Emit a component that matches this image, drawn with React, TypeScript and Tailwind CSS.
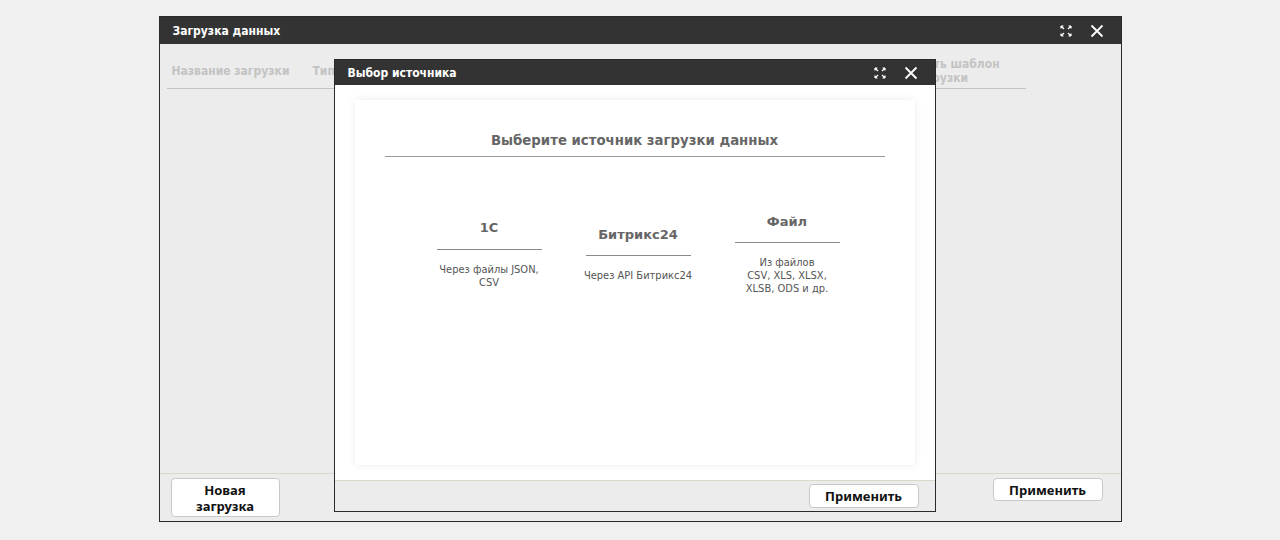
import React from 'react';

const SOURCES = [
  { title: '1C', lines: ['Через файлы JSON,', 'CSV'] },
  { title: 'Битрикс24', lines: ['Через API Битрикс24'] },
  { title: 'Файл', lines: ['Из файлов', 'CSV, XLS, XLSX,', 'XLSB, ODS и др.'] },
];

function ExpandIcon() {
  return (
    <svg width="12" height="12" viewBox="0 0 12 12" fill="none" stroke="white" strokeWidth="1.2">
      <path d="M1 1l3 3M1 1h2.5M1 1v2.5" />
      <path d="M11 1l-3 3M11 1H8.5M11 1v2.5" />
      <path d="M1 11l3-3M1 11h2.5M1 11V8.5" />
      <path d="M11 11l-3-3M11 11H8.5M11 11V8.5" />
    </svg>
  );
}

function CloseIcon() {
  return (
    <svg width="14" height="14" viewBox="0 0 14 14" fill="none" stroke="white" strokeWidth="1.8">
      <path d="M1.5 1.5l11 11M12.5 1.5l-11 11" />
    </svg>
  );
}

function TitleBar({ title, height }: { title: string; height: string }) {
  return (
    <div className={`flex shrink-0 items-center justify-between bg-[#333333] pl-[13px] pr-[17px] ${height}`}>
      <span
        className="text-[12px] font-bold text-white"
        style={{ fontFamily: '"DejaVu Sans Condensed", Tahoma, sans-serif' }}
      >
        {title}
      </span>
      <div className="flex items-center gap-[18px]">
        <ExpandIcon />
        <CloseIcon />
      </div>
    </div>
  );
}

function Button({ children, className }: { children: React.ReactNode; className: string }) {
  return (
    <button
      className={`rounded-[4px] border border-[#c8c8c8] bg-white text-[13px] font-bold leading-[16px] text-[#111] ${className}`}
      style={{ fontFamily: '"Noto Sans", sans-serif' }}
    >
      {children}
    </button>
  );
}

export default function App() {
  const verdana = { fontFamily: '"DejaVu Sans", Verdana, sans-serif' };
  const tahoma = { fontFamily: '"DejaVu Sans Condensed", Tahoma, sans-serif' };

  return (
    <div className="h-[540px] w-[1280px] bg-[#f0f0f0] pt-[16px]">
      <div className="relative mx-auto flex h-[506px] w-[963px] flex-col border border-[#2a2a2a] bg-[#ececec]">
        <TitleBar title="Загрузка данных" height="h-[27px]" />

        {/* table header of uploads */}
        <div className="flex-1 px-[7px] pt-[13px]">
          <div
            className="flex w-[859px] items-center border-b border-[#c4c4c4] pb-[3px] text-[12px] font-bold leading-[14px] text-[#c3c3c3]"
            style={tahoma}
          >
            <span className="ml-[5px] w-[141px] whitespace-nowrap">Название загрузки</span>
            <span className="w-[568px] whitespace-nowrap">Тип загрузки</span>
            <span className="flex w-[120px] flex-col text-center">
              <span>Сохранить шаблон</span>
              <span>загрузки</span>
            </span>
          </div>
        </div>

        <div className="flex h-[48px] shrink-0 items-start justify-between border-t border-[#d8d8cc] pl-[11px] pr-[18px] pt-[4px]">
          <Button className="h-[39px] w-[109px]">
            Новая
            <br />
            загрузка
          </Button>
          <Button className="h-[23px] w-[110px]">Применить</Button>
        </div>

        {/* source picker dialog */}
        <div className="absolute left-[174px] top-[42px] flex h-[453px] w-[602px] flex-col border border-[#2a2a2a] bg-white">
          <TitleBar title="Выбор источника" height="h-[25px]" />
          <div className="flex-1 px-[20px] pt-[15px]">
            <div className="flex h-[365px] flex-col items-center bg-white px-[30px] pt-[31px] shadow-[0_0_8px_rgba(0,0,0,0.08)]">
              <div
                className="w-full border-b border-[#9a9a9a] pb-[5px] text-center text-[13.3px] font-bold text-[#666]"
                style={verdana}
              >
                Выберите источник загрузки данных
              </div>
              <div className="mt-[55px] flex items-center gap-[44px] pl-[7px]">
                {SOURCES.map((s) => (
                  <div key={s.title} className="flex w-[105px] flex-col items-center">
                    <div
                      className="w-full border-b border-[#8a8a8a] pb-[11px] text-center text-[13px] font-bold text-[#666]"
                      style={verdana}
                    >
                      {s.title}
                    </div>
                    <div
                      className="mt-[13px] whitespace-nowrap text-center text-[11px] leading-[13px] text-[#555]"
                      style={tahoma}
                    >
                      {s.lines.map((l) => (
                        <div key={l}>{l}</div>
                      ))}
                    </div>
                  </div>
                ))}
              </div>
            </div>
          </div>
          <div className="flex h-[31px] shrink-0 items-start justify-end border-t border-[#d8d8cc] bg-[#ececec] pr-[16px] pt-[3px]">
            <Button className="h-[24px] w-[110px]">Применить</Button>
          </div>
        </div>
      </div>
    </div>
  );
}
